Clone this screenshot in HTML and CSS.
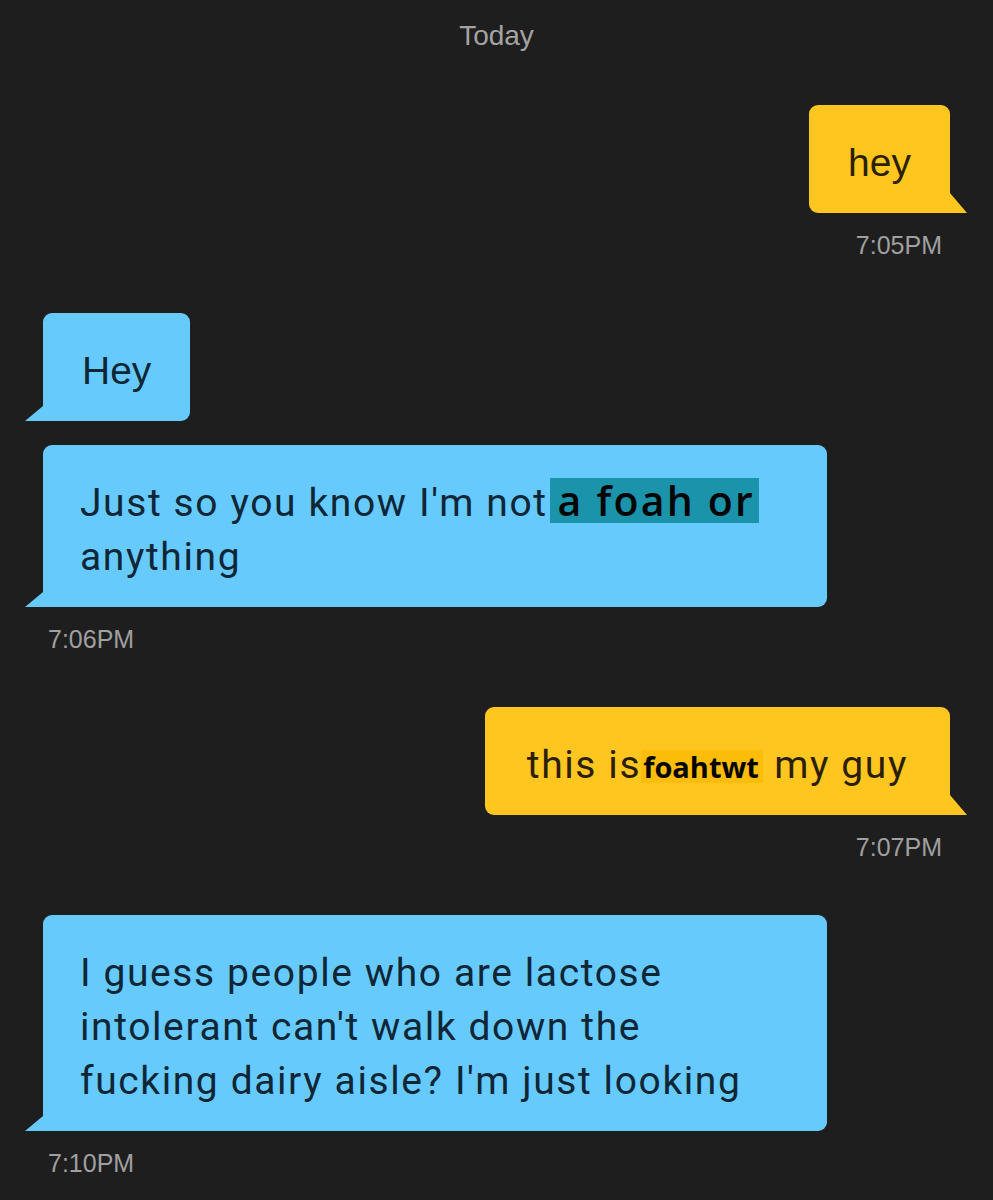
FILE: index.html
```html
<!DOCTYPE html>
<html lang="en">
<head>
  <meta charset="UTF-8">
  <meta name="viewport" content="width=device-width, initial-scale=1.0">
  <title>Chat</title>
  <link rel="stylesheet" href="styles.css">
</head>
<body>
  <div class="chat">
    <div class="day">Today</div>

    <div class="msg out">
      <div class="bubble short">hey</div>
      <div class="time">7:05PM</div>
    </div>

    <div class="msg in">
      <div class="bubble short">Hey</div>
      <div class="bubble wide">Just so you know I'm not<span class="mark mark-blue">a foah or</span><br>anything</div>
      <div class="time">7:06PM</div>
    </div>

    <div class="msg out">
      <div class="bubble">this is<span class="mark mark-yellow">foahtwt</span> my guy</div>
      <div class="time">7:07PM</div>
    </div>

    <div class="msg in">
      <div class="bubble wide">I guess people who are lactose<br>intolerant can't walk down the<br>fucking dairy aisle? I'm just looking</div>
      <div class="time">7:10PM</div>
    </div>
  </div>
</body>
</html>
```

FILE: styles.css
```css
body { margin: 0; background: #1e1e1e; font-family: "Liberation Sans", Arial, sans-serif; }
.chat { width: 993px; height: 1200px; padding: 0 43px; box-sizing: border-box; overflow: hidden; display: flex; flex-direction: column; }
.day { text-align: center; color: #a3a3a3; font-size: 28px; line-height: 30px; padding-top: 21px; margin-bottom: 54px; }

.msg { display: flex; flex-direction: column; gap: 24px; margin-bottom: 54px; }
.msg.out { align-items: flex-end; }
.msg.in { align-items: flex-start; }

.bubble { position: relative; box-sizing: border-box; padding: 31px 42px 23px; border-radius: 9px; font-family: Roboto, "Noto Sans", sans-serif; font-size: 39px; line-height: 54px; letter-spacing: 1.6px; }
.bubble.short { font-family: "Liberation Sans", Arial, sans-serif; font-size: 39px; letter-spacing: 0; padding-left: 39px; padding-right: 39px; }
.bubble.wide { width: 784px; padding-left: 37px; padding-right: 37px; }
.out .bubble { background: #ffc61f; color: #2b1f08; border-bottom-right-radius: 0; }
.in .bubble { background: #66cbfc; color: #0f2636; border-bottom-left-radius: 0; }

.out .bubble::after { content: ""; position: absolute; right: -17px; bottom: 0; width: 17px; height: 20px; background: #ffc61f; clip-path: polygon(0 0, 100% 100%, 0 100%); }
.in .bubble::after { content: ""; position: absolute; left: -18px; bottom: 0; width: 18px; height: 15px; background: #66cbfc; clip-path: polygon(100% 0, 100% 100%, 0 100%); }

.time { color: #a0a0a0; font-size: 25px; line-height: 28px; margin-top: -6px; padding: 0 8px 0 5px; }

.mark { font-family: "Open Sans", "Noto Sans", sans-serif; font-weight: 600; color: #050505; letter-spacing: 1px; }
.mark-blue { background: #1a93ab; font-size: 41px; letter-spacing: 2.2px; padding: 0 4px 0 8px; margin-left: 2px; line-height: 45px; display: inline-block; }
.mark-yellow { background: #fbbd0a; font-size: 29px; font-weight: 700; letter-spacing: 0; padding: 0 4px 0 2px; line-height: 33px; display: inline-block; }
```
